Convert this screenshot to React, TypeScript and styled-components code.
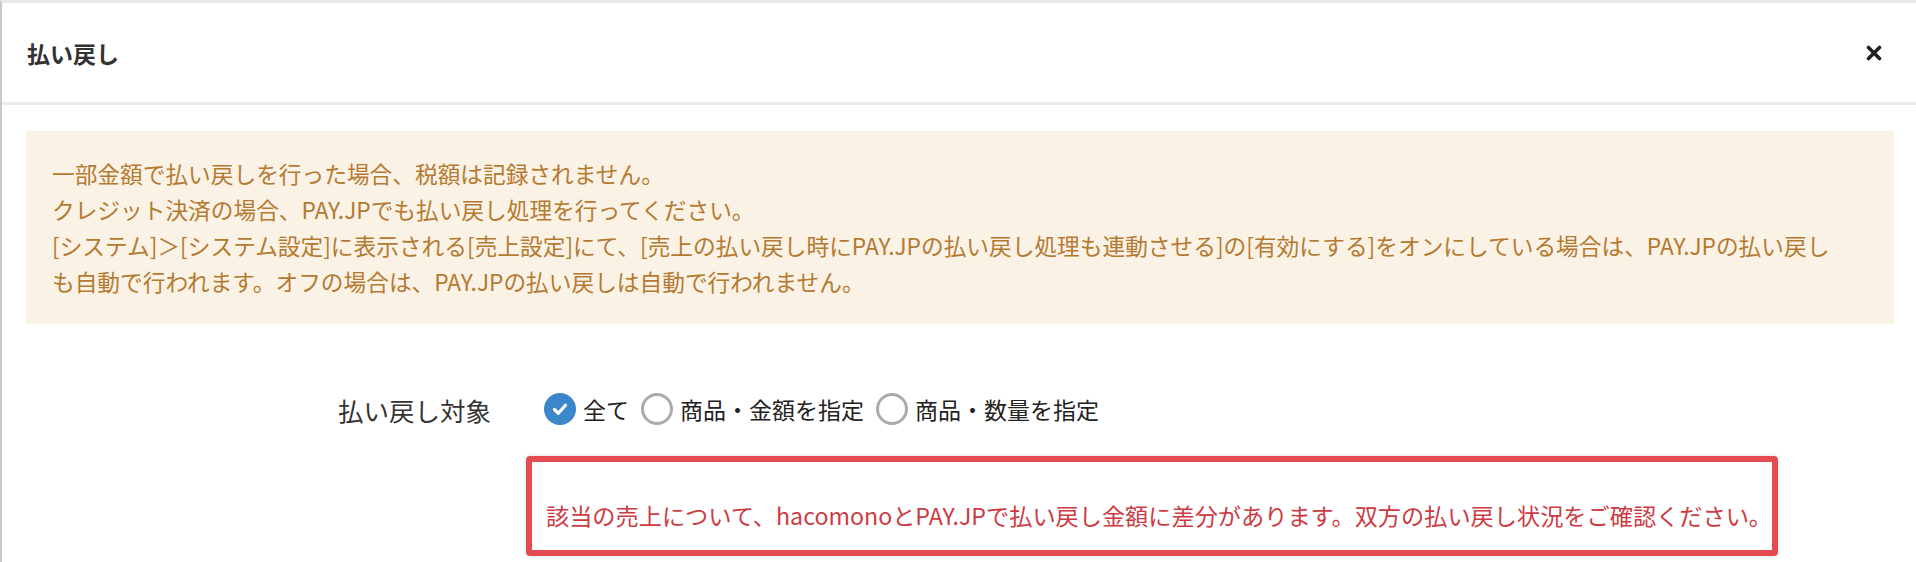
import React from 'react';
import styled, { createGlobalStyle } from 'styled-components';

const GlobalStyle = createGlobalStyle`
	body {
		margin: 0;
		background: #fff;
		font-family: 'Noto Sans CJK JP', 'Noto Sans', sans-serif;
	}
`;

const Modal = styled.div`
	border-left: 2px solid #c9c9c9;
	border-top: 3px solid #e9e9e9;
	background: #fff;
	min-height: 559px;
`;

const Header = styled.div`
	height: 99px;
	display: flex;
	align-items: center;
	justify-content: space-between;
	padding: 0 34px 0 25px;
	border-bottom: 3px solid #ececec;
	h2 {
		margin: 0;
		font-size: 23px;
		font-weight: bold;
		color: #333;
	}
`;

const CloseButton = styled.button`
	border: 0;
	background: none;
	padding: 0;
	width: 16px;
	height: 16px;
	display: flex;
	cursor: pointer;
`;

const Body = styled.div`
	padding: 26px 22px 0 24px;
`;

const Notice = styled.div`
	background-color: #fbf2e6;
	color: #b47a31;
	font-size: 22.7px;
	line-height: 36px;
	padding: 25px 26px 24px 26px;
	p {
		margin: 0;
		white-space: nowrap;
	}
`;

const FormRow = styled.div`
	display: grid;
	grid-template-columns: 482px 1fr;
	margin-top: 65px;
`;

const Label = styled.div`
	height: 40px;
	display: flex;
	align-items: center;
	justify-content: flex-end;
	padding-right: 17px;
	font-size: 25.5px;
	color: #333;
`;

const Field = styled.div`
	padding-left: 18px;
`;

const RadioGroup = styled.div`
	height: 40px;
	display: flex;
	align-items: center;
	gap: 12px;
	padding-left: 18px;
`;

const RadioOption = styled.label`
	display: flex;
	align-items: center;
	gap: 7px;
	font-size: 23px;
	color: #222;
	cursor: pointer;
`;

const RadioMark = styled.span<{ $checked?: boolean }>`
	width: 32px;
	height: 32px;
	box-sizing: border-box;
	border-radius: 50%;
	display: flex;
	align-items: center;
	justify-content: center;
	background: ${(p) => (p.$checked ? '#3b87c9' : '#fff')};
	border: ${(p) => (p.$checked ? 'none' : '3px solid #aaa')};
`;

const ErrorBox = styled.div`
	margin-top: 27px;
	width: fit-content;
	border: 6px solid #e24c50;
	border-radius: 4px;
	box-shadow: 0 0 4px rgba(0, 0, 0, 0.15);
	padding: 35px 0 17px 14px;
	font-size: 23.2px;
	line-height: 36px;
	color: #cc3b43;
`;

const options = [
	{ label: '全て', checked: true },
	{ label: '商品・金額を指定', checked: false },
	{ label: '商品・数量を指定', checked: false },
];

export default function App() {
	return (
		<>
			<GlobalStyle />
			<Modal>
				<Header>
					<h2>払い戻し</h2>
					<CloseButton aria-label='close'>
						<svg width='16' height='16' viewBox='0 0 16 16'>
							<path d='M2.5 2.5L13.5 13.5M13.5 2.5L2.5 13.5' stroke='#222' strokeWidth='3.6' strokeLinecap='round' />
						</svg>
					</CloseButton>
				</Header>
				<Body>
					<Notice>
						<p>一部金額で払い戻しを行った場合、税額は記録されません。</p>
						<p>クレジット決済の場合、PAY.JPでも払い戻し処理を行ってください。</p>
						<p>
							[システム]＞[システム設定]に表示される[売上設定]にて、[売上の払い戻し時にPAY.JPの払い戻し処理も連動させる]の[有効にする]をオンにしている場合は、PAY.JPの払い戻し
							<br />
							も自動で行われます。オフの場合は、PAY.JPの払い戻しは自動で行われません。
						</p>
					</Notice>
					<FormRow>
						<Label>払い戻し対象</Label>
						<Field>
							<RadioGroup>
								{options.map((o) => (
									<RadioOption key={o.label}>
										<RadioMark $checked={o.checked}>
											{o.checked && (
												<svg width='20' height='20' viewBox='0 0 20 20'>
													<path d='M4.5 10.5l3.8 3.8 7.2-8' fill='none' stroke='#fff' strokeWidth='3.2' strokeLinecap='round' strokeLinejoin='round' />
												</svg>
											)}
										</RadioMark>
										{o.label}
									</RadioOption>
								))}
							</RadioGroup>
							<ErrorBox>
								該当の売上について、hacomonoとPAY.JPで払い戻し金額に差分があります。双方の払い戻し状況をご確認ください。
							</ErrorBox>
						</Field>
					</FormRow>
				</Body>
			</Modal>
		</>
	);
}
